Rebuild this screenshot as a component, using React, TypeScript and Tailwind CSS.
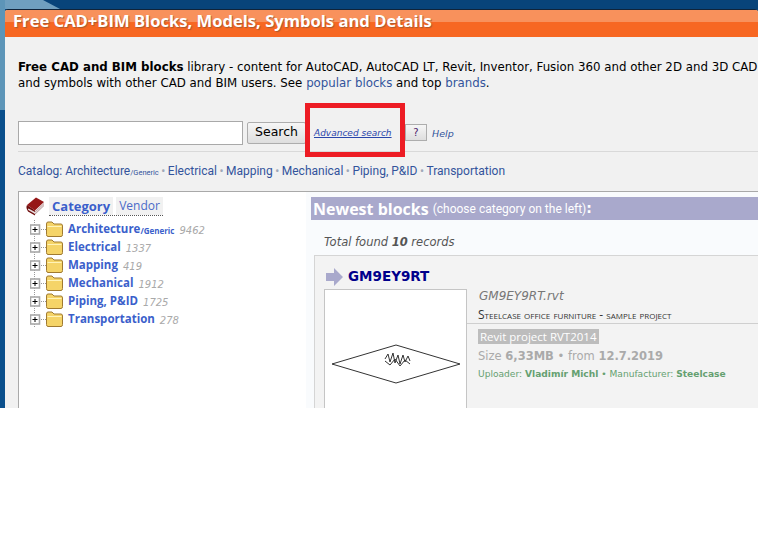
const FONT = "font-['DejaVu_Sans','Noto_Sans',sans-serif]";
const OPEN = "font-['Open_Sans','Noto_Sans',sans-serif]";
const ROBOTO = "font-['Roboto','Noto_Sans',sans-serif]";

function Book() {
  return (
    <svg width="19" height="19" viewBox="0 0 19 19" className="shrink-0">
      <path d="M1 8 Q0 12 2 14 L9 18 L18 9 L18 6 L9 14 L2 10 Z" fill="#e8dcdc" />
      <path d="M1 8 L10 0.5 L18 5 L9 13.5 Z" fill="#961818" />
      <path d="M1 8 L9 13.5 L9 15 L2.5 11.5 Q1 12.5 3 13.5 L9 17 L9 18.5 L2 14.5 Q-0.5 11 1 8 Z" fill="#6e0c0c" />
      <path d="M9 15 L18 6.5 M9 17 L18 8.5" stroke="#b89898" strokeWidth="0.8" />
    </svg>
  );
}

function Expander() {
  return (
    <svg width="18" height="18" viewBox="0 0 18 18" className="shrink-0">
      <path d="M4.5 0V18" stroke="#999" strokeDasharray="1 1" />
      <path d="M9 9.5H18" stroke="#999" strokeDasharray="1 1" />
      <rect x="0.5" y="5" width="9" height="9" fill="#fff" stroke="#a8a8a8" strokeWidth="1.6" />
      <path d="M2.5 9.5H7.5M5 7V12" stroke="#000" />
    </svg>
  );
}

function Folder() {
  return (
    <svg width="17" height="16" viewBox="0 0 17 16" className="shrink-0">
      <path d="M0.5 3 Q0.5 1 2 1 H6 L8 3 H15 Q16.5 3 16.5 5 V13.5 Q16.5 15.5 15 15.5 H2 Q0.5 15.5 0.5 13.5 Z" fill="#f5d468" stroke="#a07a30" />
      <path d="M1.5 5.5 H15.5" stroke="#fff3b8" />
    </svg>
  );
}

function TreeRow({ name, sub, count }: { name: string; sub?: string; count: string }) {
  return (
    <div className="flex h-[18px] items-center">
      <Expander />
      <span className="-ml-[2px] mr-[5px] flex"><Folder /></span>
      <span className={`${OPEN} text-[11.5px] font-bold text-[#3b5fcb]`}>{name}</span>
      {sub && <span className={`${OPEN} mt-[3px] text-[8px] font-bold text-[#3b5fcb]`}>{sub}</span>}
      <span className="ml-[5px] mt-[2px] text-[10px] italic text-[#a9a9a9]">{count}</span>
    </div>
  );
}

function Dot() {
  return <span className="mx-[2.5px] text-[#a0a8b8]">•</span>;
}

export default function App() {
  return (
    <div className={`relative h-[542px] w-[758px] overflow-hidden bg-white ${FONT}`}>
      <div className="relative h-[408px] overflow-hidden bg-[#0a4f8c] pl-[5px] pt-[9px]">
        <div className="absolute left-0 top-0 h-[9px] w-full bg-[#08447a]" />
        <div className="absolute left-0 top-0 h-[9px] w-[60px] bg-[#6f9fbf] [clip-path:polygon(0_0,43px_0,60px_9px,0_9px)]" />
        <div className="absolute left-0 top-0 h-[110px] w-[5px] bg-[#5d95b8]" />
        <div className="relative h-[399px] w-[753px] rounded-t-[3px] border-t border-[#10243a] bg-[#f1f1f1]">
          <div className="relative h-[27px] rounded-t-[2px] bg-[linear-gradient(#f8915c_0_45%,#f76722_45%_100%)] pl-[8px]">
            <h1 className={`${OPEN} whitespace-nowrap text-[16.6px] font-bold leading-[22px] text-white [text-shadow:1px_1px_1px_#a85a30]`}>
              Free CAD+BIM Blocks, Models, Symbols and Details
            </h1>
          </div>

          <div className="pl-[13px] pt-[22px]">
            <p className="whitespace-nowrap text-[11.8px] leading-[16px] text-black">
              <b>Free CAD and BIM blocks</b> library - content for AutoCAD, AutoCAD LT, Revit, Inventor, Fusion 360 and other 2D and 3D CAD
            </p>
            <p className="whitespace-nowrap text-[11.8px] leading-[16px] text-black">
              and symbols with other CAD and BIM users. See <span className="text-[#33549c]">popular blocks</span> and top <span className="text-[#33549c]">brands</span>.
            </p>

            <div className="mt-[29px] flex h-[25px] items-center">
              <div className="h-[24px] w-[225px] border border-[#a9a9a9] bg-white" />
              <div className="ml-[4px] flex h-[22px] w-[59px] items-center justify-center rounded-[2px] border border-[#adadad] bg-[linear-gradient(#f6f6f6,#dedede)] text-[12.5px] text-black">
                Search
              </div>
              <span className="ml-[8px] mt-[3px] w-[78px] whitespace-nowrap text-[9px] italic text-[#2a46ab] underline">Advanced search</span>
              <div className="ml-[13px] flex h-[17px] w-[22px] items-center justify-center border border-[#adadad] bg-[linear-gradient(#f6f6f6,#dedede)] text-[10px] text-[#4b1a6b]">
                ?
              </div>
              <span className="ml-[5px] mt-[3px] text-[9.5px] italic text-[#33549c]">Help</span>
            </div>

            <div className={`${ROBOTO} mt-[6px] w-[740px] whitespace-nowrap border-t border-[#d9d9d9] pt-[11px] text-[12px] leading-[17px] text-[#33549c]`}>
              Catalog: Architecture<span className="text-[7.5px]">/Generic</span><Dot />Electrical<Dot />Mapping<Dot />Mechanical<Dot />Piping, P&amp;ID<Dot />Transportation
            </div>

            <div className="mt-[10px] flex h-[240px] w-[740px] border-l border-t border-[#a9a9a9] bg-[#f9fbfd]">
              <div className="h-full w-[287px] shrink-0 bg-white pl-[7px] pt-[5px]">
                <div className="flex items-center">
                  <Book />
                  <div className="ml-[4px] flex h-[19px] border-b border-dotted border-[#555]">
                    <span className={`${OPEN} bg-[#f1f1f1] px-[3px] text-[13px] font-bold leading-[18px] text-[#3b5fcb]`}>Category</span>
                    <span className={`${OPEN} ml-[3px] bg-[#f1f1f1] px-[3px] text-[12px] leading-[18px] text-[#4a6ac8]`}>Vendor</span>
                  </div>
                </div>
                <div className="ml-[4px] mt-[4px]">
                  <TreeRow name="Architecture" sub="/Generic" count="9462" />
                  <TreeRow name="Electrical" count="1337" />
                  <TreeRow name="Mapping" count="419" />
                  <TreeRow name="Mechanical" count="1912" />
                  <TreeRow name="Piping, P&ID" count="1725" />
                  <TreeRow name="Transportation" count="278" />
                </div>
              </div>

              <div className="min-w-0 flex-1 pl-[5px] pt-[5px]">
                <div className="flex h-[23px] items-center whitespace-nowrap bg-[#a9a9cc] pl-[2px] font-bold text-white">
                  <span className={`${OPEN} text-[16px]`}>Newest blocks</span>
                  <span className={`${ROBOTO} ml-[4px] text-[12px] font-normal`}>(choose category on the left)</span>
                  <span className="text-[14px]">:</span>
                </div>
                <div className="pl-[13px] pt-[14px] text-[11.5px] italic leading-[17px] text-[#555]">
                  Total found <b>10</b> records
                </div>
                <div className="ml-[3px] mt-[4px] h-[200px] border-l border-t border-[#d5d5d5] bg-[#f3f3f3] pl-[9px]">
                  <div className="flex h-[33px] items-center pt-[8px]">
                    <svg width="17" height="18" viewBox="0 0 17 18" className="ml-[2px] shrink-0">
                      <path d="M0 5H8V0L17 9L8 18V13H0Z" fill="#a9a9cc" />
                    </svg>
                    <span className="ml-[5px] text-[13.5px] font-bold text-[#00008b]">GM9EY9RT</span>
                  </div>
                  <div className="flex">
                    <div className="h-[150px] w-[143px] shrink-0 border border-[#c5c5c5] bg-white">
                      <svg width="141" height="150" viewBox="0 0 141 150">
                        <path d="M7 74 L71 55 L135 74 L71 93 Z" fill="none" stroke="#333" strokeWidth="1" />
                        <path d="M60 69 L63 64 L65 72 L68 63 L70 73 L73 65 L75 74 L78 65 L80 72 L83 66 L85 71 M60 71 L65 75 L70 69 L75 76 L80 70 L85 74" fill="none" stroke="#333" strokeWidth="1" />
                      </svg>
                    </div>
                    <div className="min-w-0 flex-1">
                      <div className="pl-[12px] text-[12px] italic leading-[15px] text-[#777]">GM9EY9RT.rvt</div>
                      <div className={`${OPEN} h-[20px] border-b border-[#cfcfcf] pl-[11px] pt-[3px] text-[12px] leading-[15px] text-[#333] [font-variant:small-caps]`}>
                        Steelcase office furniture - sample project
                      </div>
                      <div className="pl-[11px] pt-[5px]">
                        <div className={`${OPEN} h-[15px] w-fit bg-[#bdbdbd] px-[2px] text-[11.5px] leading-[15px] text-white`}>Revit project RVT2014</div>
                        <div className="mt-[4px] text-[11.5px] leading-[17px] text-[#aaa]">
                          Size <b>6,33MB</b> • from <b>12.7.2019</b>
                        </div>
                        <div className="mt-[2px] text-[9.1px] leading-[14px] text-[#65a070]">
                          Uploader: <b>Vladimír Michl</b> • Manufacturer: <b>Steelcase</b>
                        </div>
                      </div>
                    </div>
                  </div>
                </div>
              </div>
            </div>
          </div>

          <div className="absolute left-[300px] top-[93px] h-[54px] w-[100px] border-[5px] border-[#ed1c24]" />
        </div>
      </div>
    </div>
  );
}
